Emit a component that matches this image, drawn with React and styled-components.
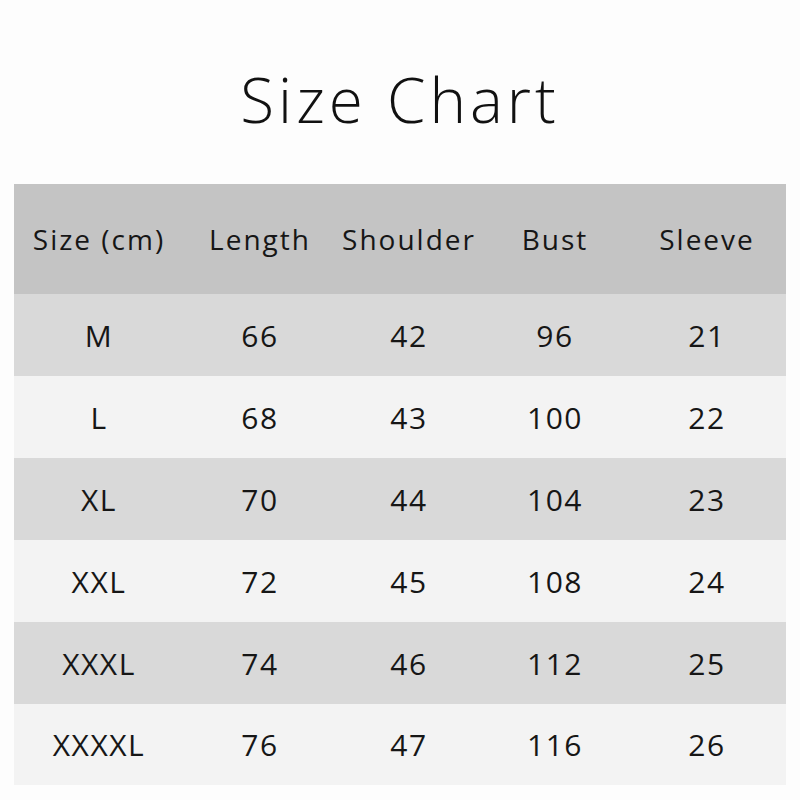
import React from "react";
import styled, { createGlobalStyle } from "styled-components";

const GlobalStyle = createGlobalStyle`
  html, body {
    margin: 0;
    padding: 0;
    background: #ffffff;
  }
  body {
    font-family: "Open Sans", "Noto Sans", sans-serif;
    color: #1b1b1b;
  }
`;

const Page = styled.div`
  width: 800px;
  height: 800px;
  display: flex;
  flex-direction: column;
  background: #fdfdfd;
`;

const TitleBar = styled.div`
  height: 184px;
  display: flex;
  align-items: center;
  justify-content: center;
`;

const Title = styled.h1`
  margin: 14px 0 0 0;
  font-family: "Open Sans", sans-serif;
  font-weight: 300;
  font-size: 62px;
  letter-spacing: 4px;
  color: #111;
`;

const Table = styled.div`
  margin: 0 14px;
  display: flex;
  flex-direction: column;
`;

const Row = styled.div`
  display: grid;
  grid-template-columns: 170px 152px 146px 146px 1fr;
  height: ${(p) => p.$h}px;
  align-items: center;
  background: ${(p) => p.$bg};
`;

const Cell = styled.div`
  text-align: center;
  font-size: ${(p) => (p.$head ? 28 : 30)}px;
  letter-spacing: ${(p) => (p.$head ? 2 : 1.5)}px;
  color: #161616;
`;

const headers = ["Size (cm)", "Length", "Shoulder", "Bust", "Sleeve"];
const rows = [
  ["M", "66", "42", "96", "21"],
  ["L", "68", "43", "100", "22"],
  ["XL", "70", "44", "104", "23"],
  ["XXL", "72", "45", "108", "24"],
  ["XXXL", "74", "46", "112", "25"],
  ["XXXXL", "76", "47", "116", "26"],
];

export default function App() {
  return (
    <Page>
      <GlobalStyle />
      <TitleBar>
        <Title>Size Chart</Title>
      </TitleBar>
      <Table>
        <Row $h={110} $bg="#c4c4c4">
          {headers.map((h) => (
            <Cell key={h} $head>
              {h}
            </Cell>
          ))}
        </Row>
        {rows.map((r, i) => (
          <Row key={r[0]} $h={i === 5 ? 81 : 82} $bg={i % 2 === 0 ? "#d9d9d9" : "#f3f3f3"}>
            {r.map((c, j) => (
              <Cell key={j}>{c}</Cell>
            ))}
          </Row>
        ))}
      </Table>
    </Page>
  );
}
